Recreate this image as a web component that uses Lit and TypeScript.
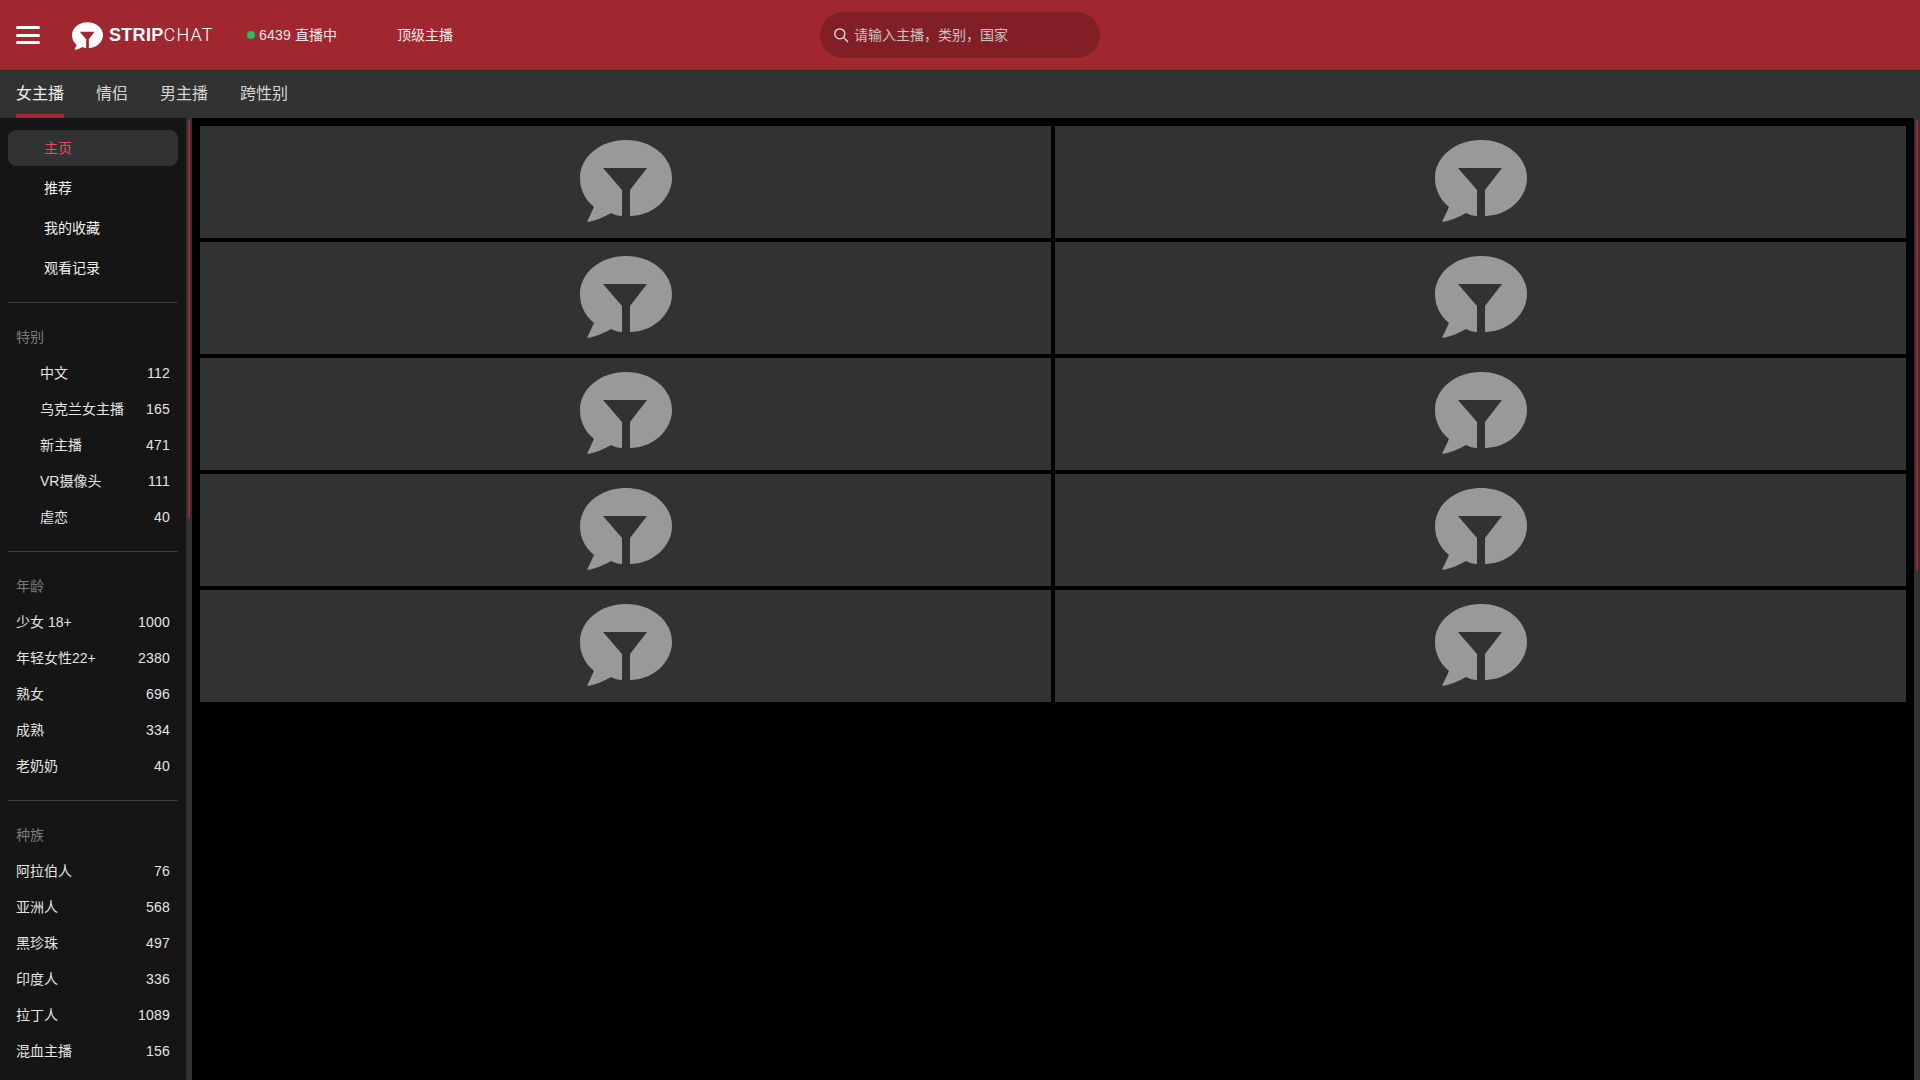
import { LitElement, html, css, svg } from "lit";
import { customElement } from "lit/decorators.js";

const BUBBLE = "M7 82L14 67C4 59 0 48 0 38C0 17 20 0 46 0C72 0 92 17 92 38C92 59 72 76 50 76V50L67 28H23L42 50V76C38 76 35 75 31 73C24 77 15 81 7 82Z";
const bubble = (cls: string) => html`<svg class=${cls} viewBox="0 0 92 84" aria-hidden="true">${svg`<path fill="currentColor" d=${BUBBLE}></path>`}</svg>`;

const sections: { title: string; indent?: boolean; rows: [string, number][] }[] = [
  { title: "特别", indent: true, rows: [["中文", 112], ["乌克兰女主播", 165], ["新主播", 471], ["VR摄像头", 111], ["虐恋", 40]] },
  { title: "年龄", rows: [["少女 18+", 1000], ["年轻女性22+", 2380], ["熟女", 696], ["成熟", 334], ["老奶奶", 40]] },
  { title: "种族", rows: [["阿拉伯人", 76], ["亚洲人", 568], ["黑珍珠", 497], ["印度人", 336], ["拉丁人", 1089], ["混血主播", 156]] },
];

@customElement("app-root")
export class AppRoot extends LitElement {
  static styles = css`
    :host {
      display: flex; flex-direction: column; height: 100vh; overflow: hidden; background: #000; color: #fff;
      font: 14px/20px "Liberation Sans", "Noto Sans CJK SC", sans-serif;
    }
    .head { flex: 0 0 70px; display: flex; align-items: center; background: #a02730; padding-left: 16px; position: relative; }
    .burger { width: 24px; display: flex; flex-direction: column; gap: 4.5px; margin-right: 32px; }
    .burger i { height: 3px; background: #fff; border-radius: 2px; }
    .logo { display: flex; align-items: center; gap: 6px; width: 175px; font: 18px/20px "Liberation Sans", sans-serif; letter-spacing: 0.3px; }
    .logo-icon { width: 31px; height: 29px; color: #fff; margin-top: 2px; }
    .logo b { font-weight: 700; }
    .logo span span { font-family: Roboto, sans-serif; font-weight: 300; letter-spacing: 1.2px; }
    .live { display: flex; align-items: center; gap: 4px; width: 150px; color: #f2e3e4; }
    .num { letter-spacing: 0.22px; }
    .dot { width: 8px; height: 8px; border-radius: 50%; background: #1fc55c; }
    .top { color: #f7eaea; width: 423px; }
    .search { width: 280px; height: 46px; box-sizing: border-box; border-radius: 23px; background: #821f26; display: flex; align-items: center; gap: 5px; padding-left: 13px; color: #cfc0c2; }
    .search svg { width: 16px; height: 16px; flex: none; }
    .tabs { flex: 0 0 48px; background: #303234; display: flex; gap: 32px; padding-left: 16px; font-size: 16px; line-height: 47px; color: #d5d5d6; box-sizing: border-box; }
    .tab { height: 48px; box-sizing: border-box; }
    .tab.on { color: #f0f0f0; border-bottom: 4px solid #a02730; }
    .body { flex: 1; min-height: 0; display: flex; }
    .side { width: 186px; flex: none; background: #151515; box-sizing: border-box; padding: 12px 8px 0; overflow: hidden; }
    .nav { height: 36px; margin-bottom: 4px; padding-left: 36px; line-height: 36px; border-radius: 8px; color: #f0f0f0; }
    .nav.on { background: #303234; color: #f4455f; }
    .sep { height: 1px; background: #3d3d3d; margin-top: 16px; }
    .sect-title { color: #7b7b7b; padding-left: 8px; height: 20px; margin: 24px 0 8px; }
    .row { height: 36px; display: flex; justify-content: space-between; align-items: center; padding: 0 8px; color: #e4e4e4; }
    .row.in { padding-left: 32px; }
    .track { width: 6px; flex: none; background: #303234; box-sizing: border-box; padding: 2px 2px 0; }
    .thumb { width: 2px; background: #a02730; border-radius: 1px; }
    .main { flex: 1; min-width: 0; box-sizing: border-box; padding: 8px 8px 0; }
    .grid { display: grid; grid-template-columns: 1fr 1fr; grid-auto-rows: 112px; gap: 4px; }
    .card { background: #303234; display: flex; justify-content: center; padding-top: 14px; box-sizing: border-box; }
    .ph { width: 92px; height: 84px; color: #999; }
  `;

  render() {
    return html`
      <header class="head">
        <div class="burger"><i></i><i></i><i></i></div>
        <div class="logo">${bubble("logo-icon")}<span><b>STRIP</b><span>CHAT</span></span></div>
        <div class="live"><i class="dot"></i><span><span class="num">6439</span> 直播中</span></div>
        <div class="top">顶级主播</div>
        <div class="search">
          <svg viewBox="0 0 16 16" fill="none" stroke="#efe3e3" stroke-width="1.3"><circle cx="6.8" cy="6.8" r="5"></circle><path d="M10.4 10.4L15 15"></path></svg>
          请输入主播，类别，国家
        </div>
      </header>
      <nav class="tabs">
        <div class="tab on">女主播</div><div class="tab">情侣</div><div class="tab">男主播</div><div class="tab">跨性别</div>
      </nav>
      <div class="body">
        <aside class="side">
          <div class="nav on">主页</div><div class="nav">推荐</div><div class="nav">我的收藏</div><div class="nav">观看记录</div>
          ${sections.map((s) => html`
            <div class="sep"></div>
            <div class="sect-title">${s.title}</div>
            ${s.rows.map(([n, c]) => html`<div class="row ${s.indent ? "in" : ""}"><span>${n}</span><span class="num">${c}</span></div>`)}
          `)}
        </aside>
        <div class="track"><div class="thumb" style="height:399px"></div></div>
        <main class="main">
          <div class="grid">
            ${Array.from({ length: 10 }, () => html`<div class="card">${bubble("ph")}</div>`)}
          </div>
        </main>
        <div class="track"><div class="thumb" style="height:451px"></div></div>
      </div>
    `;
  }
}
